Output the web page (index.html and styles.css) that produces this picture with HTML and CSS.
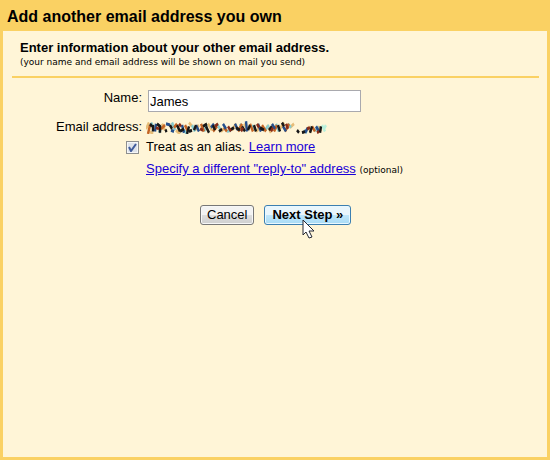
FILE: index.html
```
<!DOCTYPE html>
<html lang="en">
<head>
<meta charset="utf-8">
<title>Add another email address you own</title>
<link rel="stylesheet" href="styles.css">
</head>
<body>
<h1>Add another email address you own</h1>
<main>
  <header>
    <h2>Enter information about your other email address.</h2>
    <p class="small">(your name and email address will be shown on mail you send)</p>
  </header>
  <form>
    <div class="fields">
      <label class="label name-label" for="name">Name:</label>
      <input class="name" id="name" type="text" value="James">
      <span class="label">Email address:</span>
      <svg class="scribble" width="182" height="14" viewBox="0 2 182 11" preserveAspectRatio="none" fill="none" stroke-width="2.4" aria-hidden="true">
        <path stroke="#e7bd78" d="M0 9l3-5M4 11l3 2M16 5l3 5M30 10l4 3M43 4l3 3M49 10l4-4M62 5l4 5M75 11l4-3M86 10l4-5M98 5l4 5M110 11l4-3M121 6l4 6M134 9l4-5M144 8l4-3M162 7l3 5M172 7l3 4"/>
        <path stroke="#87ccd0" d="M5 4l3 4M13 12l3-5M26 4l3 6M38 10l3 3M46 6l3 5M58 11l3-5M71 5l3 4M81 11l4-1M94 5l3 5M106 6l3 4M119 10l4-4M130 5l3 6M142 5l3 3M158 10l3 2M169 11l3-4"/>
        <path stroke="#b8f0dc" d="M176 6l3 5M178 9l2-3"/>
        <path stroke="#c46424" d="M2 13l2-7M15 9l4-3M28 8l3-3M39 6l3 5M55 5l3 6M67 11l4-4M78 8l3 3M92 11l4-6M104 5l3 6M116 6l4 5M128 11l3-5M139 11l4-6M166 7l3 4"/>
        <path stroke="#244e8c" d="M9 11l1-6M20 5l4 1M25 10l3 1M36 6l2 6M50 6l3 5M65 8l3-3M77 5l3 4M89 5l3 5M100 3l1 8M112 5l3 6M126 5l3 4M137 7l3 4M159 12l3-4M170 7l3 4"/>
        <path stroke="#171717" d="M4 5l2 2M7 6v5M11 5l3 2v5M19 11l2-1M24 6l2 3M31 6l3 5M34 11l4-2M41 13l2-6M43 11l3-1M48 10l2-4M57 7l4-2M60 7l3 5M67 6l2 4M73 11l3-2M84 10l4-2M90 8l4 2M96 7l3 4M102 10l2-4M108 6l2 5M114 8l4 2M123 10l3-3M132 6l2 5M136 4l2 3M151 10l2 2M156 12l3-1M164 12l2-5M174 12l1-5"/>
        <path stroke="#882c19" d="M10 8l3 1M33 5l2 2M54 9l3 1M69 7l3-2M82 7l3 4M95 11l2-3M111 5l2 3M125 11l2-3M140 5l2 4M161 9l3-1M171 12l2-1"/>
      </svg>
      <input class="check" id="alias" type="checkbox" checked>
      <div class="line"><label for="alias">Treat as an alias.</label> <a href="#">Learn more</a></div>
      <div class="line reply"><a href="#">Specify a different "reply-to" address</a> <span class="small">(optional)</span></div>
    </div>
    <div class="actions">
      <button type="button">Cancel</button>
      <button class="next" type="button">Next Step »
        <svg class="cursor" width="13" height="20" viewBox="0 0 13 20" aria-hidden="true"><path d="M1 1v15l3-3 3 6 3-1-3-6h5z" fill="#fff" stroke="#242733"/></svg>
      </button>
    </div>
  </form>
</main>
</body>
</html>
```
FILE: styles.css
```
* { box-sizing: border-box; }
body {
  margin: 0;
  min-height: 100vh;
  display: flex;
  flex-direction: column;
  padding: 0 3px 3px;
  background: #fad163;
  color: #000;
  font: 13px/16px "Liberation Sans", Arial, sans-serif;
}
h1, h2, p { margin: 0; }
h1 { font-size: 16px; line-height: 19px; padding: 7px 4px 5px; }
main { flex: 1; padding: 9px 8px 8px 9px; background: #fff5d7; }
header { padding: 0 8px 7px; border-bottom: 2px solid #fad163; }
h2 { font-size: 13px; line-height: 16px; }
.small { font: 9px/13px "DejaVu Sans", Verdana, sans-serif; }
.fields {
  display: grid;
  grid-template-columns: 130px 1fr;
  column-gap: 4px;
  grid-template-rows: 31px 18px 22px 22px;
  align-items: center;
  padding-top: 9px;
}
.label { text-align: right; }
.name-label { align-self: start; padding-top: 3px; }
.name {
  align-self: start;
  width: 213px;
  height: 22px;
  margin: 3px 0 0 2px;
  padding: 1px;
  border: 1px solid #a9a9ae;
  background: #fff;
  font: inherit;
}
.check {
  appearance: none;
  justify-self: end;
  width: 13px;
  height: 13px;
  margin: 0 3px 0 0;
  border: 1px solid #8e8f8f;
  background: #dfe3ea url("data:image/svg+xml,%3Csvg xmlns='http://www.w3.org/2000/svg' viewBox='0 0 11 11'%3E%3Cpath d='M2 5l2 4 5-7' fill='none' stroke='%23405b9b' stroke-width='2'/%3E%3C/svg%3E");
  box-shadow: inset 0 0 0 1px #f5f6f8;
}
.reply { grid-column: 2; }
a { color: #1900d8; }
.actions { display: flex; gap: 10px; padding: 25px 0 0 188px; }
button {
  position: relative;
  height: 20px;
  padding: 0 6px;
  border: 1px solid #777;
  border-radius: 3px;
  background: linear-gradient(#f3f3f3 0 50%, #dedede 50%, #cfcfcf);
  box-shadow: inset 0 0 0 1px #f7f7f7;
  color: #000;
  font: 13px/16px "Liberation Sans", Arial, sans-serif;
}
.next {
  padding: 0 7px;
  border-color: #3c7fb1;
  background: linear-gradient(#e9f6fd 0 50%, #c0e7fb 50%, #a9dbf5);
  box-shadow: inset 0 0 0 1px #e9f8ff;
  font-weight: bold;
}
.cursor { position: absolute; left: 37px; top: 13px; }
```
